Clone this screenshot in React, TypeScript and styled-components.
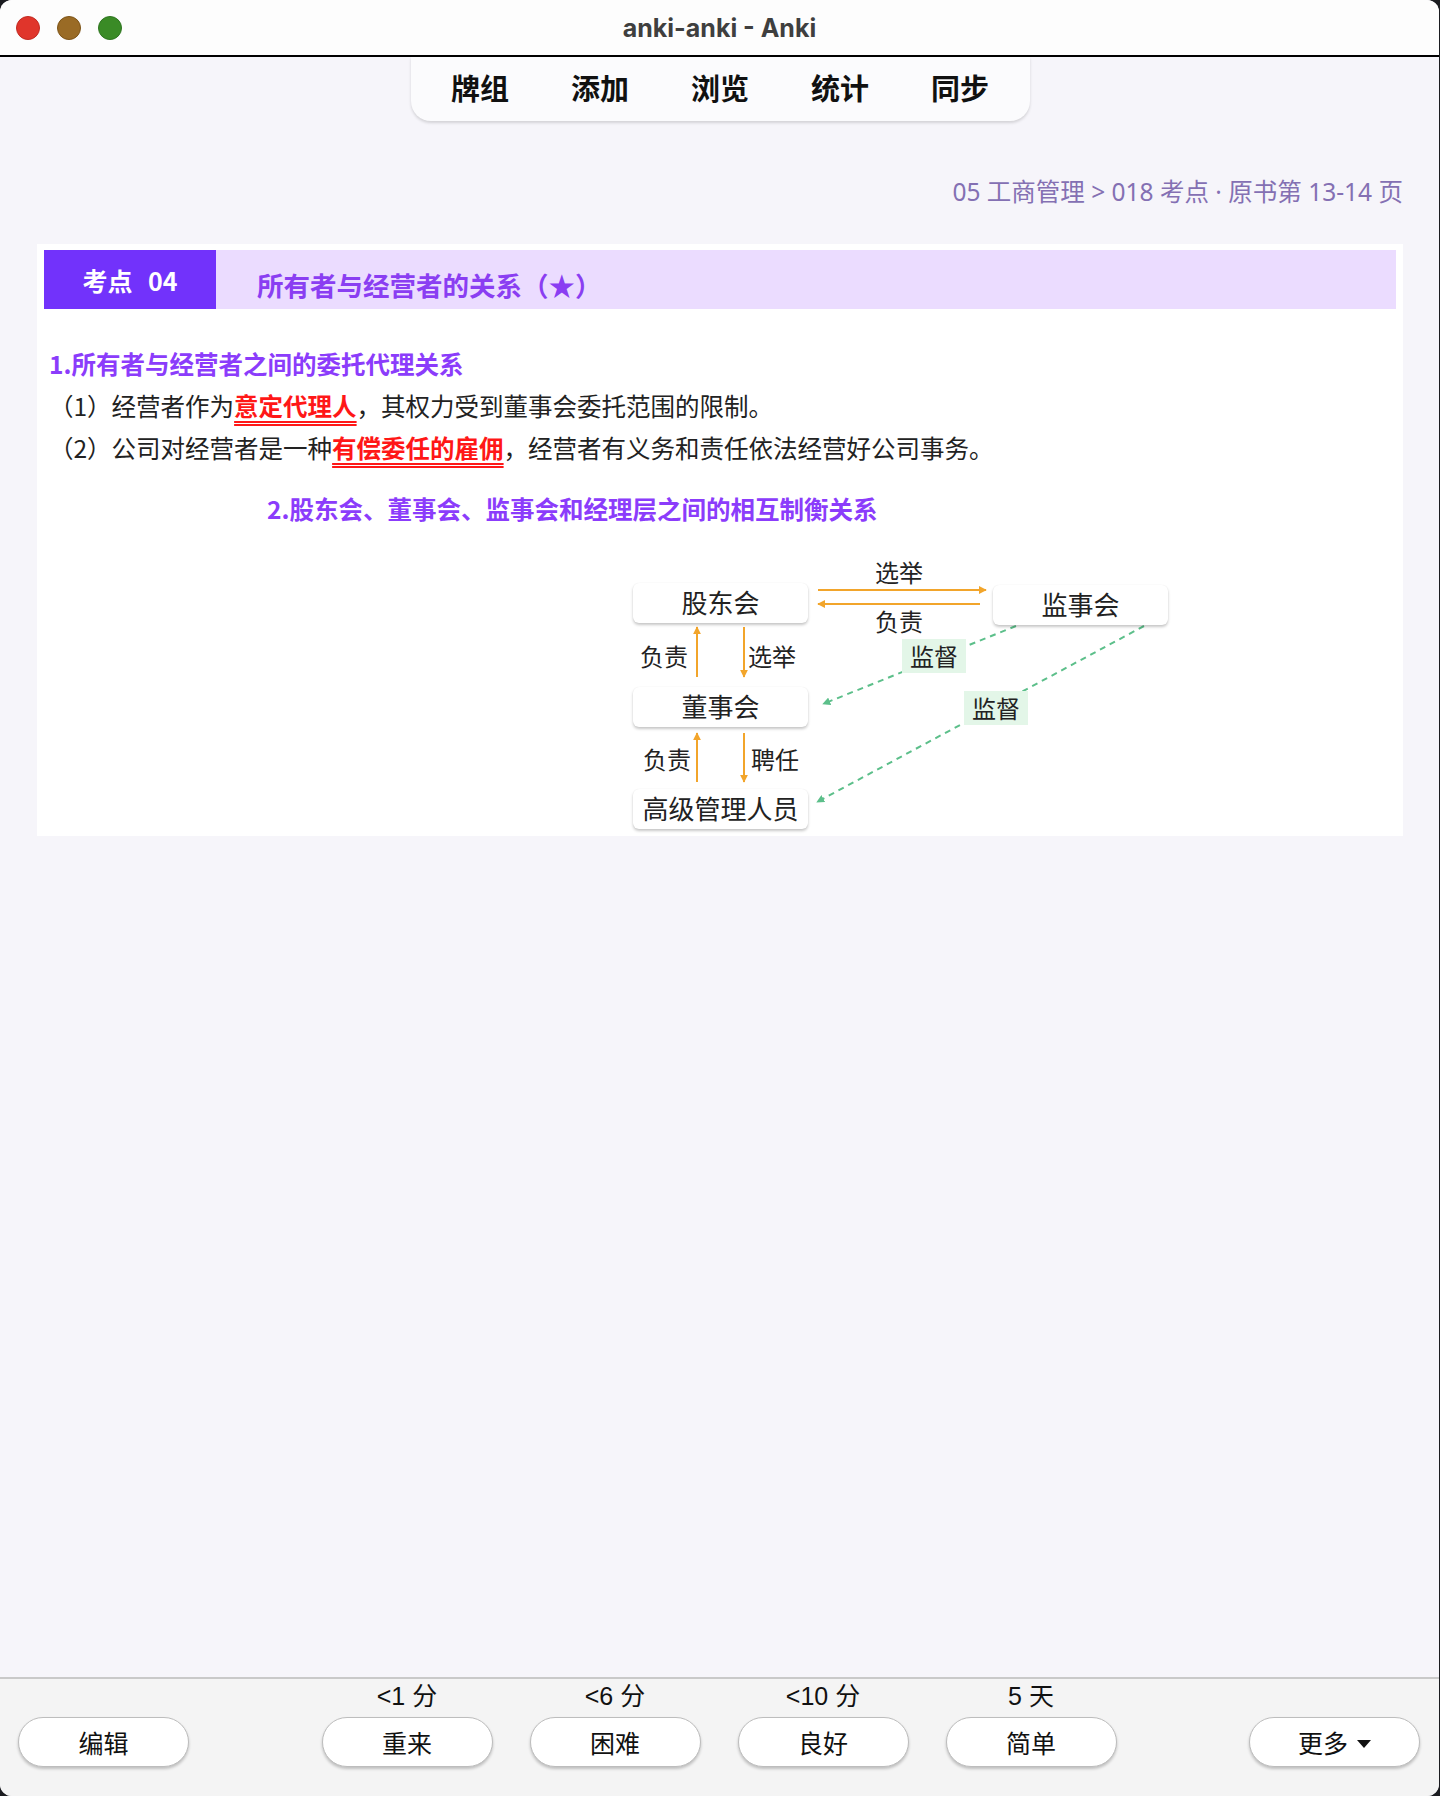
import styled, { createGlobalStyle } from "styled-components"

const CJK = `"Noto Sans CJK SC", "Noto Sans", sans-serif`

const GlobalStyle = createGlobalStyle`
    html, body {
        margin: 0;
        padding: 0;
        background: #1b1c20;
    }
    * {
        box-sizing: border-box;
    }
`

const Window = styled.div`
    width: 1439px;
    height: 1796px;
    border-radius: 12px;
    overflow: hidden;
    display: flex;
    flex-direction: column;
    background: #f6f5fa;
    font-family: ${CJK};
`

const TitleBar = styled.div`
    height: 57px;
    flex-shrink: 0;
    display: grid;
    grid-template-columns: 1fr auto 1fr;
    align-items: center;
    background: #fdfdfd;
    border-bottom: 2px solid #000;
    padding: 0 16px;
`

const Lights = styled.div`
    display: flex;
    gap: 17px;
`

const Light = styled.span<{ color: string; edge: string }>`
    width: 24px;
    height: 24px;
    border-radius: 50%;
    background: ${p => p.color};
    border: 1px solid ${p => p.edge};
`

const Title = styled.div`
    font-family: "Inter", "Noto Sans", sans-serif;
    font-weight: 700;
    font-size: 25px;
    color: #3f3f3f;
`

const Content = styled.div`
    flex: 1;
    display: flex;
    flex-direction: column;
    padding: 0 36px 0 37px;
`

const TopNav = styled.nav`
    align-self: center;
    width: 619px;
    height: 64px;
    display: flex;
    align-items: center;
    justify-content: center;
    gap: 62px;
    background: #fbfbfd;
    border-radius: 0 0 20px 20px;
    box-shadow: 0 2px 3px rgba(0, 0, 0, 0.14);
`

const NavItem = styled.span`
    font-size: 29px;
    font-weight: 700;
    color: #111;
    line-height: 1;
    margin-top: -3px;
`

const Crumb = styled.div`
    margin-top: 56px;
    text-align: right;
    font-family: "Noto Sans", "Noto Sans CJK SC", sans-serif;
    font-size: 24.5px;
    line-height: 30px;
    color: #8470b3;
`

const Card = styled.div`
    margin-top: 37px;
    background: #fff;
    padding: 6px 7px 0 7px;
`

const Header = styled.div`
    display: flex;
    height: 59px;
    background: #ebdcff;
`

const HeaderTag = styled.div`
    width: 172px;
    display: flex;
    align-items: center;
    justify-content: center;
    background: #7232fb;
    color: #fff;
    font-size: 25px;
    font-weight: 700;
    word-spacing: 10px;
`

const HeaderTitle = styled.div`
    padding: 10px 0 0 41px;
    display: flex;
    align-items: center;
    font-size: 26.5px;
    font-weight: 700;
    color: #8a3ef2;
`

const Body = styled.div`
    padding: 34px 0 0 5px;
    font-size: 24.5px;
    line-height: 42px;
    color: #222;
`

const Section = styled.div<{ indent?: number }>`
    font-weight: 700;
    color: #8b3cfb;
    margin-left: ${p => p.indent ?? 0}px;
    margin-top: ${p => (p.indent ? 19 : 0)}px;
`

const Line = styled.div``

const Mark = styled.span`
    color: #ff1717;
    font-weight: 700;
    text-decoration: underline double #ff1717;
    text-underline-offset: 5px;
    text-decoration-thickness: 1.5px;
`

const Diagram = styled.div`
    position: relative;
    margin: 29px 0 0 550px;
    width: 600px;
    height: 277px;
`

const Wires = styled.svg`
    position: absolute;
    inset: 0;
`

const Node = styled.div<{ x: number; y: number }>`
    position: absolute;
    left: ${p => p.x}px;
    top: ${p => p.y}px;
    width: 175px;
    height: 40px;
    display: flex;
    align-items: center;
    justify-content: center;
    background: #fff;
    border-radius: 6px;
    box-shadow: 0 2px 3px rgba(0, 0, 0, 0.22), 0 0 1px rgba(0, 0, 0, 0.08);
    font-size: 26px;
    color: #222;
    line-height: 1;
    padding-bottom: 3px;
`

const Tag = styled.span<{ x: number; y: number; boxed?: boolean }>`
    position: absolute;
    left: ${p => p.x}px;
    top: ${p => p.y}px;
    transform: translate(-50%, -50%);
    font-size: 24px;
    line-height: 1;
    color: #222;
    white-space: nowrap;
    padding: ${p => (p.boxed ? "5px 8px" : "0")};
    background: ${p => (p.boxed ? "#e3f6e8" : "transparent")};
`

const BottomBar = styled.div`
    flex-shrink: 0;
    display: flex;
    justify-content: space-between;
    align-items: flex-end;
    background: #f4f4f4;
    border-top: 2px solid #c9c9c9;
    padding: 4px 19px 29px 18px;
`

const Answers = styled.div`
    display: flex;
    gap: 37px;
`

const AnswerCol = styled.div`
    display: flex;
    flex-direction: column;
    align-items: center;
    gap: 8px;
`

const Due = styled.span`
    font-family: "Liberation Sans", ${CJK};
    font-size: 25px;
    line-height: 26px;
    color: #111;
`

const Button = styled.button`
    width: 171px;
    height: 50px;
    border-radius: 25px;
    border: 1.5px solid #bdbdbd;
    background: #fff;
    box-shadow: 0 2px 3px rgba(0, 0, 0, 0.22);
    font-family: ${CJK};
    font-size: 25px;
    color: #111;
    display: flex;
    align-items: center;
    justify-content: center;
    gap: 9px;
    padding: 0;
`

const Caret = styled.span`
    width: 0;
    height: 0;
    border-left: 7px solid transparent;
    border-right: 7px solid transparent;
    border-top: 8px solid #111;
    margin-top: 3px;
`

const answers = [
    { due: "<1 分", label: "重来" },
    { due: "<6 分", label: "困难" },
    { due: "<10 分", label: "良好" },
    { due: "5 天", label: "简单" },
]

const ORANGE = "#f2a52b"
const GREEN = "#5cbf8a"

const App = () => {
    return (
        <>
            <GlobalStyle />
            <Window>
                <TitleBar>
                    <Lights>
                        <Light color="#e0352b" edge="#c22a22" />
                        <Light color="#9a6b25" edge="#7d5418" />
                        <Light color="#3a8b26" edge="#2e7520" />
                    </Lights>
                    <Title>anki-anki - Anki</Title>
                    <span />
                </TitleBar>
                <Content>
                    <TopNav>
                        <NavItem>牌组</NavItem>
                        <NavItem>添加</NavItem>
                        <NavItem>浏览</NavItem>
                        <NavItem>统计</NavItem>
                        <NavItem>同步</NavItem>
                    </TopNav>
                    <Crumb>05 工商管理 &gt; 018 考点 · 原书第 13-14 页</Crumb>
                    <Card>
                        <Header>
                            <HeaderTag>考点 04</HeaderTag>
                            <HeaderTitle>所有者与经营者的关系（★）</HeaderTitle>
                        </Header>
                        <Body>
                            <Section>1.所有者与经营者之间的委托代理关系</Section>
                            <Line>
                                （1）经营者作为<Mark>意定代理人</Mark>，其权力受到董事会委托范围的限制。
                            </Line>
                            <Line>
                                （2）公司对经营者是一种<Mark>有偿委任的雇佣</Mark>，经营者有义务和责任依法经营好公司事务。
                            </Line>
                            <Section indent={218}>2.股东会、董事会、监事会和经理层之间的相互制衡关系</Section>
                            <Diagram>
                                <Wires width="600" height="277" viewBox="0 0 600 277">
                                    <defs>
                                        <marker id="o" viewBox="0 0 10 10" refX="9" refY="5" markerWidth="4" markerHeight="4" orient="auto">
                                            <path d="M0 0 L10 5 L0 10 Z" fill={ORANGE} />
                                        </marker>
                                        <marker id="g" viewBox="0 0 10 10" refX="9" refY="5" markerWidth="4" markerHeight="4" orient="auto">
                                            <path d="M0 0 L10 5 L0 10 Z" fill={GREEN} />
                                        </marker>
                                    </defs>
                                    <g stroke={ORANGE} strokeWidth="2" fill="none" markerEnd="url(#o)">
                                        <line x1="219" y1="31" x2="387" y2="31" />
                                        <line x1="381" y1="45" x2="219" y2="45" />
                                        <line x1="98" y1="118" x2="98" y2="68" />
                                        <line x1="145" y1="68" x2="145" y2="118" />
                                        <line x1="98" y1="223" x2="98" y2="174" />
                                        <line x1="145" y1="174" x2="145" y2="223" />
                                    </g>
                                    <g stroke={GREEN} strokeWidth="2" fill="none" strokeDasharray="6 5" markerEnd="url(#g)">
                                        <line x1="417" y1="67" x2="224" y2="145" />
                                        <line x1="545" y1="67" x2="218" y2="243" />
                                    </g>
                                </Wires>
                                <Node x={34} y={24}>股东会</Node>
                                <Node x={394} y={26}>监事会</Node>
                                <Node x={34} y={128}>董事会</Node>
                                <Node x={34} y={230}>高级管理人员</Node>
                                <Tag x={300} y={13}>选举</Tag>
                                <Tag x={300} y={62}>负责</Tag>
                                <Tag x={65} y={97}>负责</Tag>
                                <Tag x={173} y={97}>选举</Tag>
                                <Tag x={68} y={200}>负责</Tag>
                                <Tag x={176} y={200}>聘任</Tag>
                                <Tag x={335} y={97} boxed>监督</Tag>
                                <Tag x={397} y={149} boxed>监督</Tag>
                            </Diagram>
                        </Body>
                    </Card>
                </Content>
                <BottomBar>
                    <Button>编辑</Button>
                    <Answers>
                        {answers.map(a => (
                            <AnswerCol key={a.label}>
                                <Due>{a.due}</Due>
                                <Button>{a.label}</Button>
                            </AnswerCol>
                        ))}
                    </Answers>
                    <Button>
                        更多
                        <Caret />
                    </Button>
                </BottomBar>
            </Window>
        </>
    )
}

export default App
